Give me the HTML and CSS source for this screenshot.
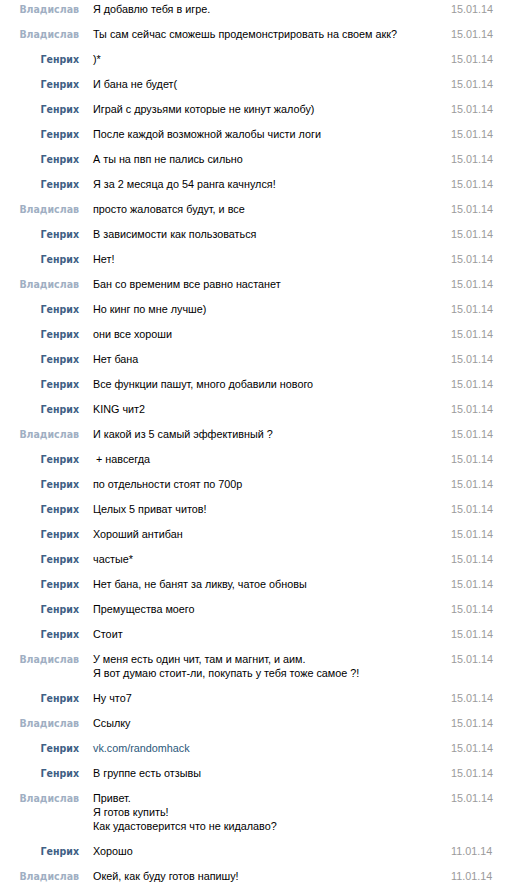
FILE: index.html
```html
<!DOCTYPE html>
<html lang="ru">
<head>
<meta charset="utf-8">
<title>Переписка</title>
<link rel="stylesheet" href="styles.css">
</head>
<body>
<div class="log">
  <div class="row"><div class="name me">Владислав</div><div class="text">Я добавлю тебя в игре.</div><div class="date">15.01.14</div></div>
  <div class="row"><div class="name me">Владислав</div><div class="text">Ты сам сейчас сможешь продемонстрировать на своем акк?</div><div class="date">15.01.14</div></div>
  <div class="row"><div class="name he">Генрих</div><div class="text">)*</div><div class="date">15.01.14</div></div>
  <div class="row"><div class="name he">Генрих</div><div class="text">И бана не будет(</div><div class="date">15.01.14</div></div>
  <div class="row"><div class="name he">Генрих</div><div class="text">Играй с друзьями которые не кинут жалобу)</div><div class="date">15.01.14</div></div>
  <div class="row"><div class="name he">Генрих</div><div class="text">После каждой возможной жалобы чисти логи</div><div class="date">15.01.14</div></div>
  <div class="row"><div class="name he">Генрих</div><div class="text">А ты на пвп не пались сильно</div><div class="date">15.01.14</div></div>
  <div class="row"><div class="name he">Генрих</div><div class="text">Я за 2 месяца до 54 ранга качнулся!</div><div class="date">15.01.14</div></div>
  <div class="row"><div class="name me">Владислав</div><div class="text">просто жаловатся будут, и все</div><div class="date">15.01.14</div></div>
  <div class="row"><div class="name he">Генрих</div><div class="text">В зависимости как пользоваться</div><div class="date">15.01.14</div></div>
  <div class="row"><div class="name he">Генрих</div><div class="text">Нет!</div><div class="date">15.01.14</div></div>
  <div class="row"><div class="name me">Владислав</div><div class="text">Бан со временим все равно настанет</div><div class="date">15.01.14</div></div>
  <div class="row"><div class="name he">Генрих</div><div class="text">Но кинг по мне лучше)</div><div class="date">15.01.14</div></div>
  <div class="row"><div class="name he">Генрих</div><div class="text">они все хороши</div><div class="date">15.01.14</div></div>
  <div class="row"><div class="name he">Генрих</div><div class="text">Нет бана</div><div class="date">15.01.14</div></div>
  <div class="row"><div class="name he">Генрих</div><div class="text">Все функции пашут, много добавили нового</div><div class="date">15.01.14</div></div>
  <div class="row"><div class="name he">Генрих</div><div class="text">KING чит2</div><div class="date">15.01.14</div></div>
  <div class="row"><div class="name me">Владислав</div><div class="text">И какой из 5 самый эффективный ?</div><div class="date">15.01.14</div></div>
  <div class="row"><div class="name he">Генрих</div><div class="text">&nbsp;+ навсегда</div><div class="date">15.01.14</div></div>
  <div class="row"><div class="name he">Генрих</div><div class="text">по отдельности стоят по 700р</div><div class="date">15.01.14</div></div>
  <div class="row"><div class="name he">Генрих</div><div class="text">Целых 5 приват читов!</div><div class="date">15.01.14</div></div>
  <div class="row"><div class="name he">Генрих</div><div class="text">Хороший антибан</div><div class="date">15.01.14</div></div>
  <div class="row"><div class="name he">Генрих</div><div class="text">частые*</div><div class="date">15.01.14</div></div>
  <div class="row"><div class="name he">Генрих</div><div class="text">Нет бана, не банят за ликву, чатое обновы</div><div class="date">15.01.14</div></div>
  <div class="row"><div class="name he">Генрих</div><div class="text">Премущества моего</div><div class="date">15.01.14</div></div>
  <div class="row"><div class="name he">Генрих</div><div class="text">Стоит</div><div class="date">15.01.14</div></div>
  <div class="row"><div class="name me">Владислав</div><div class="text">У меня есть один чит, там и магнит, и аим.<br>Я вот думаю стоит-ли, покупать у тебя тоже самое ?!</div><div class="date">15.01.14</div></div>
  <div class="row"><div class="name he">Генрих</div><div class="text">Ну что7</div><div class="date">15.01.14</div></div>
  <div class="row"><div class="name me">Владислав</div><div class="text">Ссылку</div><div class="date">15.01.14</div></div>
  <div class="row"><div class="name he">Генрих</div><div class="text"><a class="link" href="#">vk.com/randomhack</a></div><div class="date">15.01.14</div></div>
  <div class="row"><div class="name he">Генрих</div><div class="text">В группе есть отзывы</div><div class="date">15.01.14</div></div>
  <div class="row"><div class="name me">Владислав</div><div class="text">Привет.<br>Я готов купить!<br>Как удастоверится что не кидалаво?</div><div class="date">15.01.14</div></div>
  <div class="row"><div class="name he">Генрих</div><div class="text">Хорошо</div><div class="date">11.01.14</div></div>
  <div class="row"><div class="name me">Владислав</div><div class="text">Окей, как буду готов напишу!</div><div class="date">11.01.14</div></div>
</div>
</body>
</html>
```

FILE: styles.css
```css
html, body {
  margin: 0;
  padding: 0;
  background: #ffffff;
}
body {
  font-family: "Liberation Sans", Arial, sans-serif;
  font-size: 10.8px;
  line-height: 14px;
  color: #000000;
}
.log {
  display: flex;
  flex-direction: column;
}
.row {
  display: flex;
  align-items: baseline;
  padding: 2px 0 9px;
}
.name {
  width: 79px;
  flex: none;
  text-align: right;
  font-family: "DejaVu Sans Condensed", "DejaVu Sans", sans-serif;
  font-size: 10.5px;
  line-height: 14px;
  font-weight: bold;
  margin-right: 14px;
}
.name.me {
  color: #a0afc3;
}
.name.he {
  color: #3f5f85;
}
.text {
  flex: 1;
}
.link {
  color: #2b587a;
  text-decoration: none;
}
.date {
  width: 63px;
  flex: none;
  color: #9a9a9a;
}
```
